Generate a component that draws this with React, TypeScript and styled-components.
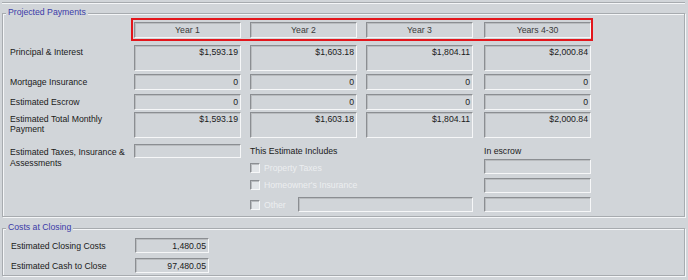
import React from 'react';
import styled, { createGlobalStyle } from 'styled-components';

const GlobalStyle = createGlobalStyle`
  html, body {
    margin: 0;
    padding: 0;
  }

  body {
    background: #d1d5d9;
    font-family: "Liberation Sans", Arial, sans-serif;
    font-size: 8.7px;
    color: #1a1a1a;
    width: 688px;
    height: 280px;
    overflow: hidden;
  }
`;

const FACE = '#d1d5d9';
const SHADE = '#a7abaf';
const LIGHT = '#f4f6f8';

const years = ['Year 1', 'Year 2', 'Year 3', 'Years 4-30'];

const rows = [
  { label: 'Principal & Interest', values: ['$1,593.19', '$1,603.18', '$1,804.11', '$2,000.84'], tall: true, gap: 4 },
  { label: 'Mortgage Insurance', values: ['0', '0', '0', '0'], tall: false, gap: 3 },
  { label: 'Estimated Escrow', values: ['0', '0', '0', '0'], tall: false, gap: 4 },
  { label: 'Estimated Total Monthly Payment', values: ['$1,593.19', '$1,603.18', '$1,804.11', '$2,000.84'], tall: true, gap: 2 },
];

const includes = ['Property Taxes', "Homeowner's Insurance"];

export default function App() {
  return (
    <>
      <GlobalStyle />
      <Page>
        <TopRule />

        <Group $top={10} $pad="4px 0 4px 7px">
          <GroupTitle>Projected Payments</GroupTitle>

          <HeaderRow>
            <Highlight>
              {years.map((y) => (
                <HeaderBox key={y}>{y}</HeaderBox>
              ))}
            </Highlight>
          </HeaderRow>

          {rows.map((r) => (
            <Row key={r.label} $gap={r.gap}>
              <RowLabel $tall={r.tall}>{r.label}</RowLabel>
              <Cols>
                {r.values.map((v, i) => (
                  <ValueBox key={i} $h={r.tall ? 26 : 16} $tall={r.tall}>
                    {v}
                  </ValueBox>
                ))}
              </Cols>
            </Row>
          ))}

          <Lower>
            <TaxLabel>
              Estimated Taxes, Insurance &amp;
              <br />
              Assessments
            </TaxLabel>
            <ValueBox $h={14} $tall={false} />
            <Includes>
              <Heading>This Estimate Includes</Heading>
              {includes.map((t) => (
                <CheckRow key={t}>
                  <Check />
                  <CheckText>{t}</CheckText>
                </CheckRow>
              ))}
              <OtherRow>
                <Check />
                <CheckText>Other</CheckText>
                <OtherBox />
              </OtherRow>
            </Includes>
            <Escrow>
              <Heading>In escrow</Heading>
              <EscrowBoxes>
                <ValueBox $h={15} $tall={false} />
                <ValueBox $h={15} $tall={false} />
                <ValueBox $h={15} $tall={false} />
              </EscrowBoxes>
            </Escrow>
          </Lower>
        </Group>

        <Group $top={11} $pad="9px 0 2px 8px">
          <GroupTitle>Costs at Closing</GroupTitle>
          <ClosingRow>
            <ClosingLabel>Estimated Closing Costs</ClosingLabel>
            <ClosingBox>1,480.05</ClosingBox>
          </ClosingRow>
          <ClosingRow>
            <ClosingLabel>Estimated Cash to Close</ClosingLabel>
            <ClosingBox>97,480.05</ClosingBox>
          </ClosingRow>
        </Group>
      </Page>
    </>
  );
}

const Page = styled.div`
  padding: 0 2px;
  width: 683px;
`;

const TopRule = styled.div`
  height: 2px;
  border-bottom: 1px solid ${SHADE};
  box-shadow: 0 1px 0 ${LIGHT};
`;

const Group = styled.div<{ $top: number; $pad: string }>`
  position: relative;
  margin-top: ${({ $top }) => $top}px;
  padding: ${({ $pad }) => $pad};
  border: 1px solid ${SHADE};
  box-shadow: inset 1px 1px 0 ${LIGHT}, 1px 1px 0 ${LIGHT};
`;

const GroupTitle = styled.div`
  position: absolute;
  top: -7px;
  left: 3px;
  padding: 0 2px;
  line-height: 11px;
  background: ${FACE};
  color: #3b3ba8;
`;

const HeaderRow = styled.div`
  display: flex;
  padding-left: 121px;
`;

const Highlight = styled.div`
  display: grid;
  grid-template-columns: 116px 116px 118px 107px;
  padding: 2px 0 1px 1px;
  border: 2px solid #e3161c;
`;

const sunken = `
  box-sizing: border-box;
  border: 1px solid;
  border-color: #8b8e92 #f6f7f8 #f6f7f8 #8b8e92;
  box-shadow: inset 1px 1px 0 #b9bcbf;
`;

const HeaderBox = styled.div`
  ${sunken}
  width: 107px;
  height: 16px;
  display: flex;
  align-items: center;
  justify-content: center;
  color: #3a3a3a;
`;

const Row = styled.div<{ $gap: number }>`
  display: flex;
  margin-top: ${({ $gap }) => $gap}px;
`;

const RowLabel = styled.div<{ $tall: boolean }>`
  width: 118px;
  padding-right: 6px;
  line-height: 10px;
  padding-top: ${({ $tall }) => ($tall ? '2px' : '3px')};
`;

const Cols = styled.div`
  display: grid;
  grid-template-columns: 116px 116px 118px 107px;
`;

const ValueBox = styled.div<{ $h: number; $tall: boolean }>`
  ${sunken}
  width: 107px;
  height: ${({ $h }) => $h}px;
  padding: ${({ $tall }) => ($tall ? '1px 2px 0 0' : '0 2px 0 0')};
  display: flex;
  align-items: ${({ $tall }) => ($tall ? 'flex-start' : 'center')};
  justify-content: flex-end;
  line-height: 10px;
`;

const Lower = styled.div`
  display: grid;
  grid-template-columns: 124px 116px 234px 107px;
  margin-top: 6px;
  height: 68px;
`;

const TaxLabel = styled.div`
  padding-top: 3px;
  line-height: 11px;
`;

const Includes = styled.div`
  display: flex;
  flex-direction: column;
  gap: 7px;
  padding-top: 2px;
  width: 223px;
`;

const Heading = styled.div`
  line-height: 10px;
  height: 10px;
`;

const CheckRow = styled.div`
  display: flex;
  align-items: center;
  height: 10px;
`;

const OtherRow = styled(CheckRow)`
  height: 15px;
`;

const Check = styled.span`
  ${sunken}
  width: 10px;
  height: 10px;
  background: #e2e5e8;
  margin-right: 4px;
`;

const CheckText = styled.span`
  color: #eceef0;
  line-height: 10px;
`;

const OtherBox = styled.div`
  ${sunken}
  margin-left: auto;
  width: 175px;
  height: 15px;
`;

const Escrow = styled.div`
  display: flex;
  flex-direction: column;
  padding-top: 2px;
`;

const EscrowBoxes = styled.div`
  display: flex;
  flex-direction: column;
  gap: 4px;
  margin-top: 3px;
`;

const ClosingRow = styled.div`
  display: flex;
  align-items: center;
  height: 15px;

  & + & {
    margin-top: 5px;
  }
`;

const ClosingLabel = styled.div`
  width: 124px;
  line-height: 10px;
`;

const ClosingBox = styled.div`
  ${sunken}
  width: 74px;
  height: 15px;
  padding-right: 2px;
  display: flex;
  align-items: center;
  justify-content: flex-end;
  line-height: 10px;
`;
